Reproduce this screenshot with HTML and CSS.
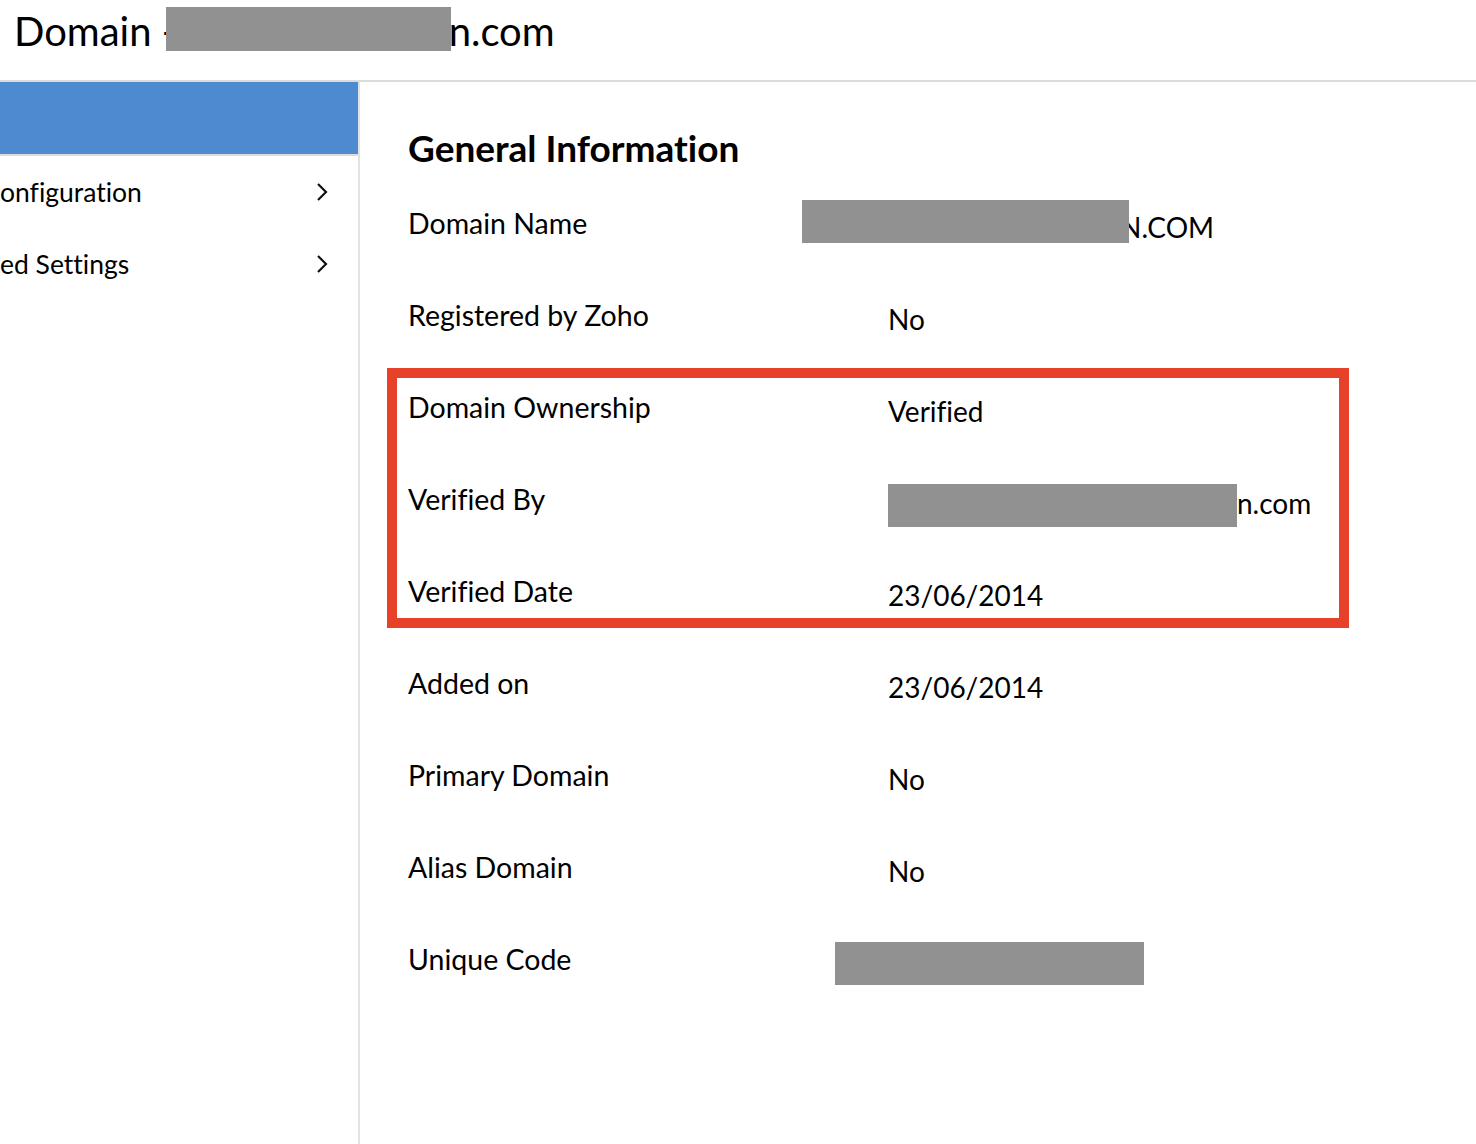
FILE: index.html
```html
<!DOCTYPE html>
<html lang="en">
<head>
    <meta charset="UTF-8">
    <meta name="viewport" content="width=device-width, initial-scale=1.0">
    <title>Domain Details</title>
    <link rel="stylesheet" href="styles.css">
</head>
<body>
    <div class="page-header">
        <h1 class="page-title">Domain -<span class="redact redact-title"></span>n.com</h1>
    </div>
    <div class="layout">
        <div class="sidebar">
            <div class="nav-active"></div>
            <div class="nav-item">
                <span class="nav-label">onfiguration</span>
                <svg class="chevron" width="12" height="20" viewBox="0 0 12 20"><polyline points="2,2 10,10 2,18" fill="none" stroke="#111" stroke-width="2.2"/></svg>
            </div>
            <div class="nav-item">
                <span class="nav-label">ed Settings</span>
                <svg class="chevron" width="12" height="20" viewBox="0 0 12 20"><polyline points="2,2 10,10 2,18" fill="none" stroke="#111" stroke-width="2.2"/></svg>
            </div>
        </div>
        <div class="content">
            <h2 class="section-title">General Information</h2>
            <div class="info-list">
                <div class="info-row">
                    <div class="info-label">Domain Name</div>
                    <div class="info-value"><span class="redact redact-domain"></span>N.COM</div>
                </div>
                <div class="info-row">
                    <div class="info-label">Registered by Zoho</div>
                    <div class="info-value">No</div>
                </div>
                <div class="highlight-box">
                    <div class="info-row">
                        <div class="info-label">Domain Ownership</div>
                        <div class="info-value">Verified</div>
                    </div>
                    <div class="info-row">
                        <div class="info-label">Verified By</div>
                        <div class="info-value"><span class="redact redact-verifier"></span>n.com</div>
                    </div>
                    <div class="info-row">
                        <div class="info-label">Verified Date</div>
                        <div class="info-value">23/06/2014</div>
                    </div>
                </div>
                <div class="info-row">
                    <div class="info-label">Added on</div>
                    <div class="info-value">23/06/2014</div>
                </div>
                <div class="info-row">
                    <div class="info-label">Primary Domain</div>
                    <div class="info-value">No</div>
                </div>
                <div class="info-row">
                    <div class="info-label">Alias Domain</div>
                    <div class="info-value">No</div>
                </div>
                <div class="info-row">
                    <div class="info-label">Unique Code</div>
                    <div class="info-value"><span class="redact redact-code"></span></div>
                </div>
            </div>
        </div>
    </div>
</body>
</html>
```

FILE: styles.css
```css
body {
    font-family: Lato, "Open Sans", sans-serif;
    font-variant-ligatures: none;
    color: #000;
    background-color: #fff;
    margin: 0;
    padding: 0;
}
.page-header {
    height: 80px;
    border-bottom: 2px solid #dcdcdc;
    padding-left: 14px;
}
.page-title {
    margin: 0;
    font-size: 40px;
    font-weight: normal;
    line-height: 62px;
    white-space: nowrap;
}
.redact {
    display: inline-block;
    position: relative;
    z-index: 1;
    background-color: #919191;
    vertical-align: top;
}
.redact-title {
    width: 285px;
    height: 44px;
    margin: 7px -2px 0 -11px;
}
.layout {
    display: flex;
    min-height: 1062px;
}
.sidebar {
    width: 358px;
    flex-shrink: 0;
    border-right: 2px solid #e2e2e2;
    overflow: hidden;
}
.nav-active {
    height: 72px;
    background-color: #4e8ad0;
    border-bottom: 2px solid #dcdcdc;
}
.nav-item {
    height: 72px;
    display: flex;
    align-items: center;
    justify-content: space-between;
    padding-right: 30px;
    font-size: 26.5px;
}
.content {
    flex: 1;
    padding: 44px 0 0 48px;
}
.section-title {
    margin: 0 0 37px;
    font-size: 37px;
    font-weight: bold;
    line-height: 44px;
}
.info-list {
    display: flex;
    flex-direction: column;
    gap: 52px;
}
.info-row {
    display: grid;
    grid-template-columns: 480px 1fr;
}
.info-label {
    font-size: 28.5px;
    line-height: 32px;
}
.info-value {
    font-size: 28px;
    line-height: 40px;
    height: 40px;
    white-space: nowrap;
}
.highlight-box {
    display: flex;
    flex-direction: column;
    gap: 52px;
    width: 962px;
    box-sizing: border-box;
    margin: -23px 0 -13px -21px;
    padding: 13px 0 3px 11px;
    border: 10px solid #e8412a;
}
.redact-domain {
    width: 327px;
    height: 43px;
    margin: -7px -9px 0 -86px;
}
.redact-verifier {
    width: 349px;
    height: 43px;
    margin-top: 1px;
}
.redact-code {
    width: 309px;
    height: 43px;
    margin: -1px 0 0 -53px;
}
```
